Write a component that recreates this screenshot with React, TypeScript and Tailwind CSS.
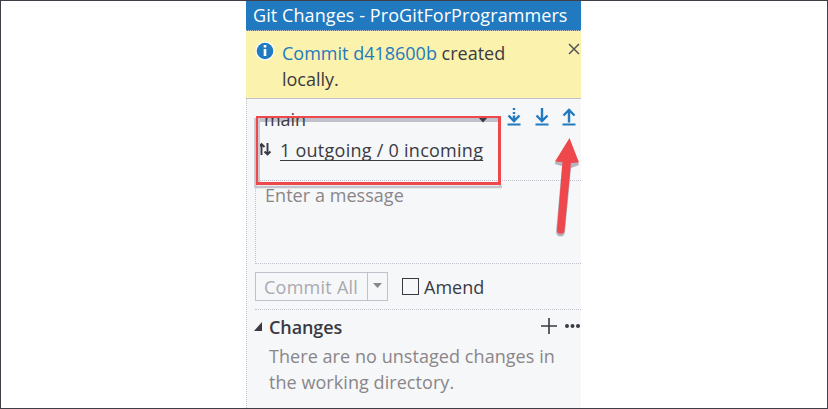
import type { ReactNode } from "react";

type SyncKind = "fetch" | "pull" | "push";

function SyncIcon({ kind }: { kind: SyncKind }) {
  return (
    <svg width="14" height="20" viewBox="0 0 14 20" fill="none" stroke="#217ac0" strokeWidth="2.400">
      {kind === "fetch" && <path d="M7 0v2M7 4v2M7 7.500v6.500M1.500 7.500L7 13 12.500 7.500" />}
      {kind === "pull" && <path d="M7 0v14M1.500 7.500L7 13 12.500 7.500" />}
      {kind === "push" && <path d="M7 14.500V1M1.500 7.500L7 2 12.500 7.500" />}
      <path d="M0.500 16.500h13" strokeWidth="2" />
    </svg>
  );
}

function Line({ className, children }: { className: string; children: ReactNode }) {
  return (
    <div className={`text-[18px] leading-[26px] whitespace-nowrap ${className}`}>
      <span>{children}</span>
    </div>
  );
}

function Callouts() {
  return (
    <svg className="absolute top-0 left-0" width="828" height="409" fill="none">
      <path d="M255.500 118v69h245V185" stroke="#c4c5cd" strokeWidth="2.500" />
      <path d="M259 118v64" stroke="#c9cad2" strokeWidth="2" />
      <rect x="257" y="117" width="242" height="66.500" stroke="#ee484d" strokeWidth="2" />
      <path d="M256 183.500h245M499.500 116v69" stroke="#ee484d" strokeWidth="3" />
      <path d="M569.500 140l9.500 25-8 3-6 64a4.500 4.500 0 0 1-9 0l6-66-7.500-2z" fill="#b3b4bd" />
      <path
        d="M569.500 138l9.500 24.500-8 .5-6.500 67a3.700 3.700 0 0 1-7.500 0l5.500-68-7.500-.5z"
        fill="#ee484d"
      />
    </svg>
  );
}

export default function App() {
  return (
    <div className="relative flex h-[409px] w-[828px] justify-start overflow-hidden border border-[#3f3d45] bg-white pl-[245px] font-['Open_Sans','Noto_Sans',sans-serif] text-[#3b3a42]">
      <main className="flex h-[407px] w-[335px] flex-col overflow-hidden bg-[#f5f7f9]">
        <header className="h-[30px] shrink-0 border-b border-dotted border-[#c0c1cb] bg-[#217ac0] pl-[7px] text-white">
          <Line className="pt-[1px] tracking-[0.08px]">Git Changes - ProGitForProgrammers</Line>
        </header>
        <section className="flex h-[68px] shrink-0 border-b border-[#c0c1cb] bg-[#faf2ad] pl-[9px]">
          <svg className="mt-[10px] shrink-0" width="20" height="20" viewBox="0 0 20 20">
            <circle cx="10" cy="10" r="9.500" fill="#fff" />
            <circle cx="10" cy="10" r="8.300" fill="#217ac0" />
            <path d="M10 4v2.600M10 8v7" stroke="#fff" strokeWidth="2.600" />
          </svg>
          <div className="w-[293px] shrink-0 pt-[9px] pl-[7px]">
            <Line className="font-medium">
              <span className="text-[#217ac0]">Commit d418600b</span> created
            </Line>
            <Line className="font-medium">locally.</Line>
          </div>
          <svg className="mt-[12px] shrink-0" width="12" height="12" stroke="#55545b" strokeWidth="1.500">
            <path d="M1 1l10 10M11 1L1 11" />
          </svg>
        </section>
        <div className="flex h-[309px] flex-col border-l border-dotted border-[#c0c1cb] pl-[8px]">
          <section className="flex h-[90px] shrink-0">
            <div className="mt-[17px] flex w-[245px] shrink-0 flex-col pl-[2px]">
              <div className="flex h-[6px] items-start justify-between border-b-4 border-[#c0c1cb] pr-[12px] pl-[7px]">
                <Line className="-mt-[10px] font-medium tracking-[-0.1px]">main</Line>
                <svg className="mt-[1px] shrink-0" width="10" height="6">
                  <path d="M0 0h10L5 5.500z" fill="#3b3a42" />
                </svg>
              </div>
              <div className="flex pt-[15px] pl-[1px]">
                <svg
                  className="mt-[5px] shrink-0"
                  width="14"
                  height="15"
                  fill="none"
                  stroke="#3b3a42"
                  strokeWidth="1.900"
                >
                  <path d="M3.500 13V2M0.500 5l3-3 3 3M9.500 1v11.500M6.500 9.500l3 3 3-3" />
                </svg>
                <Line className="ml-[8px] font-medium tracking-[0.26px]">
                  <span className="underline decoration-1 underline-offset-[3px] [text-decoration-skip-ink:none]">
                    1 outgoing / 0 incoming
                  </span>
                </Line>
              </div>
            </div>
            <div className="mt-[9px] ml-[7px] flex gap-[13.500px]">
              <SyncIcon kind="fetch" />
              <SyncIcon kind="pull" />
              <SyncIcon kind="push" />
            </div>
          </section>
          <section className="-mt-[9px] h-[84px] shrink-0 border-y border-l border-dotted border-[#c0c1cb] pl-[9px] text-[#8a8688]">
            <Line className="pt-[1px] tracking-[0.05px]">Enter a message</Line>
          </section>
          <section className="flex h-[46px] shrink-0 items-start border-b border-dotted border-[#c0c1cb] pt-[8px]">
            <div className="flex h-[29px] w-[133px] border border-[#c0c1cb] text-[#aaa9b0]">
              <Line className="w-[112px] border-r border-[#c0c1cb] pl-[8px] pt-[1px] tracking-[0.25px]">
                Commit All
              </Line>
              <svg className="mt-[10px] ml-[5px]" width="9" height="6">
                <path d="M0 0h9L4.500 5z" fill="#88878d" />
              </svg>
            </div>
            <div className="mt-[6px] ml-[14px] h-[17px] w-[17px] border-[1.500px] border-[#3b3a42]" />
            <Line className="ml-[5px] pt-[2px] font-medium">Amend</Line>
          </section>
          <section className="flex h-[32px] shrink-0 items-start">
            <svg className="mt-[12px] -ml-px shrink-0" width="8" height="9">
              <path d="M8 0v9H0z" fill="#3b3a42" />
            </svg>
            <Line className="ml-[7px] w-[273px] shrink-0 pt-[4px] font-semibold tracking-[-0.1px]">Changes</Line>
            <svg className="mt-[7px] ml-[-1px] shrink-0" width="42" height="18">
              <path d="M0 9h16M8 1v16" stroke="#3b3a42" strokeWidth="1.600" />
              <g fill="#3b3a42">
                <circle cx="26" cy="9" r="2" />
                <circle cx="31.500" cy="9" r="2" />
                <circle cx="37" cy="9" r="2" />
              </g>
            </svg>
          </section>
          <section className="pt-[1px] pl-[14px] text-[#8a8688]">
            <Line className="tracking-[0.06px]">There are no unstaged changes in</Line>
            <Line className="tracking-[0.06px]">the working directory.</Line>
          </section>
        </div>
      </main>
      <div className="absolute -top-px -left-px">
        <Callouts />
      </div>
    </div>
  );
}
